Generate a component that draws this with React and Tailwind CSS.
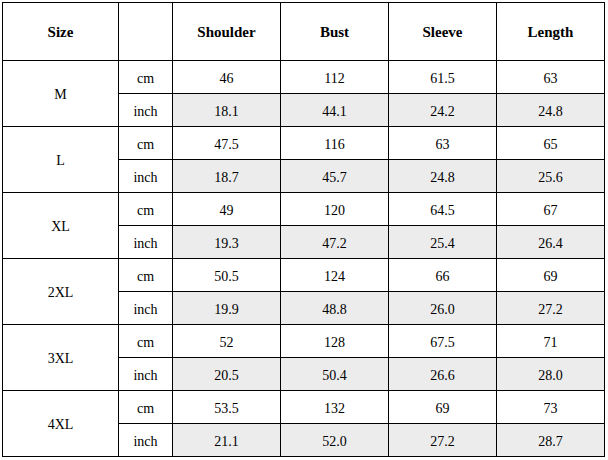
const columns = ['Shoulder', 'Bust', 'Sleeve', 'Length'];

const sizes = [
  { size: 'M', cm: ['46', '112', '61.5', '63'], inch: ['18.1', '44.1', '24.2', '24.8'] },
  { size: 'L', cm: ['47.5', '116', '63', '65'], inch: ['18.7', '45.7', '24.8', '25.6'] },
  { size: 'XL', cm: ['49', '120', '64.5', '67'], inch: ['19.3', '47.2', '25.4', '26.4'] },
  { size: '2XL', cm: ['50.5', '124', '66', '69'], inch: ['19.9', '48.8', '26.0', '27.2'] },
  { size: '3XL', cm: ['52', '128', '67.5', '71'], inch: ['20.5', '50.4', '26.6', '28.0'] },
  { size: '4XL', cm: ['53.5', '132', '69', '73'], inch: ['21.1', '52.0', '27.2', '28.7'] },
];

const cell = 'flex items-center justify-center pt-[2px]';

export default function App() {
  return (
    <div className="h-[460px] w-[608px] bg-white pl-[2px] pt-[2px] font-['Liberation_Serif',serif] text-[14px] text-black">
      <div className="grid w-max grid-cols-[115px_53px_107px_107px_107px_107px] grid-rows-[57px] auto-rows-[32px] gap-px border border-black bg-black">
        <div className={`${cell} bg-white text-[15px] font-bold`}>Size</div>
        <div className="bg-white" />
        {columns.map((name) => (
          <div key={name} className={`${cell} bg-white text-[15px] font-bold`}>
            {name}
          </div>
        ))}
        {sizes.map((row) => (
          <div key={row.size} className="contents">
            <div className={`${cell} row-span-2 bg-white`}>{row.size}</div>
            <div className={`${cell} bg-white`}>cm</div>
            {row.cm.map((value, i) => (
              <div key={`cm-${i}`} className={`${cell} bg-white`}>
                {value}
              </div>
            ))}
            <div className={`${cell} bg-white`}>inch</div>
            {row.inch.map((value, i) => (
              <div key={`in-${i}`} className={`${cell} bg-[#ececec]`}>
                {value}
              </div>
            ))}
          </div>
        ))}
      </div>
    </div>
  );
}
